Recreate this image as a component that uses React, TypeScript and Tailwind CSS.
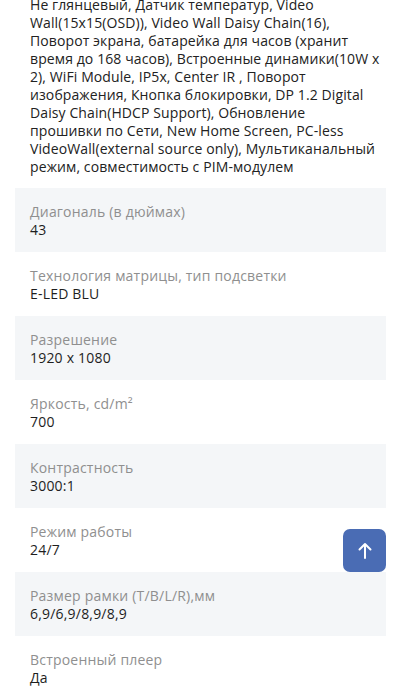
const intro: string[] = [
  "Не глянцевый, Датчик температур, Video",
  "Wall(15x15(OSD)), Video Wall Daisy Chain(16),",
  "Поворот экрана, батарейка для часов (хранит",
  "время до 168 часов), Встроенные динамики(10W x",
  "2), WiFi Module, IP5x, Center IR , Поворот",
  "изображения, Кнопка блокировки, DP 1.2 Digital",
  "Daisy Chain(HDCP Support), Обновление",
  "прошивки по Сети, New Home Screen, PC-less",
  "VideoWall(external source only), Мультиканальный",
  "режим, совместимость с PIM-модулем",
];

const specs: { label: string; value: string }[] = [
  { label: "Диагональ (в дюймах)", value: "43" },
  { label: "Технология матрицы, тип подсветки", value: "E-LED BLU" },
  { label: "Разрешение", value: "1920 x 1080" },
  { label: "Яркость, cd/m²", value: "700" },
  { label: "Контрастность", value: "3000:1" },
  { label: "Режим работы", value: "24/7" },
  { label: "Размер рамки (T/B/L/R),мм", value: "6,9/6,9/8,9/8,9" },
  { label: "Встроенный плеер", value: "Да" },
];

export default function App() {
  return (
    <div
      className="relative w-[401px] h-[699px] overflow-hidden bg-white text-[#222222]"
      style={{ fontFamily: '"Open Sans", "Noto Sans", sans-serif' }}
    >
      <div className="mt-[-4px] px-[30px] text-[14px] leading-[18px] tracking-[0.1px]">
        {intro.map((line) => (
          <div key={line} className="whitespace-nowrap">
            {line}
          </div>
        ))}
      </div>

      <div className="mt-[12px] mx-[15px] flex flex-col">
        {specs.map((s, i) => (
          <div
            key={s.label}
            className={
              "h-[64px] px-[15px] pt-[15px] text-[14px] leading-[18px] tracking-[0.2px] " +
              (i % 2 === 0 ? "bg-[#f4f6f8]" : "bg-white")
            }
          >
            <div className="text-[#8f8f8f]">{s.label}</div>
            <div className="text-[#1e1e1e]">{s.value}</div>
          </div>
        ))}
      </div>

      <button className="absolute left-[343px] top-[529px] w-[43px] h-[43px] rounded-[7px] bg-[#4a6cb4] flex items-center justify-center">
        <svg width="16" height="18" viewBox="0 0 16 18" fill="none">
          <path
            d="M8 16V2M2.5 7.5L8 2l5.5 5.5"
            stroke="white"
            strokeWidth="2"
            strokeLinecap="round"
            strokeLinejoin="round"
          />
        </svg>
      </button>
    </div>
  );
}
